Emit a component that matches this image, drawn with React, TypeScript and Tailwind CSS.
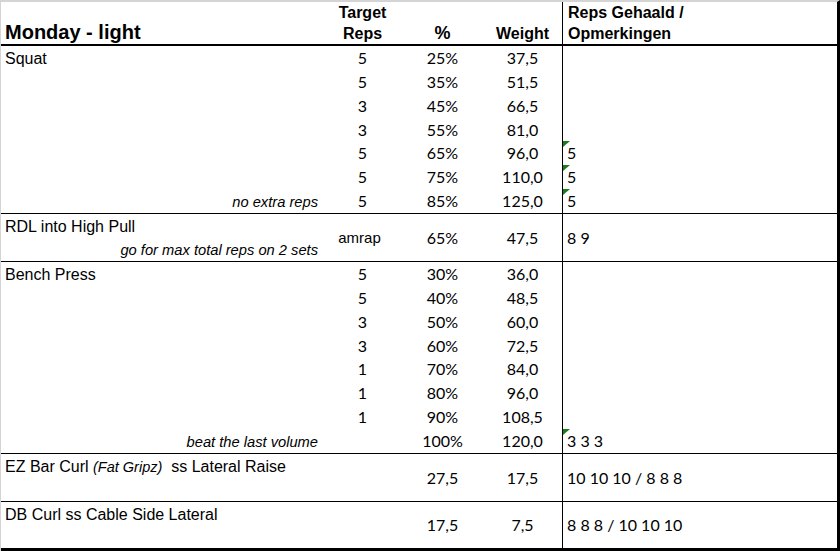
import React from "react";

const ARIAL = "font-['Liberation_Sans',Arial,sans-serif]";
const NUM = "font-['Lato','Noto_Sans',sans-serif]";

type Item = React.ReactNode;

function Tri() {
  return (
    <svg className="absolute left-0 top-0" width="7" height="6" viewBox="0 0 7 6">
      <polygon points="0,0 7,0 0,6" fill="#1e7a1e" />
    </svg>
  );
}

function Col({ items, className, align }: { items: Item[]; className: string; align: string }) {
  return (
    <div className={`flex flex-col ${className}`}>
      {items.map((it, i) => (
        <div key={i} className={`relative flex min-h-0 flex-1 items-center ${align}`}>
          {it}
        </div>
      ))}
    </div>
  );
}

function Note({ children }: { children: React.ReactNode }) {
  return <span className={`${ARIAL} text-[14.7px] italic leading-[18px]`}>{children}</span>;
}

function Name({ children }: { children: React.ReactNode }) {
  return <span className={`${ARIAL} whitespace-pre text-[16px] leading-[18px]`}>{children}</span>;
}

function Num({ children }: { children: React.ReactNode }) {
  return <span className={`${NUM} text-[16px] leading-[18px]`}>{children}</span>;
}

function Comment({ children, tri }: { children?: React.ReactNode; tri?: boolean }) {
  return (
    <>
      {tri && <Tri />}
      <span className={`${NUM} pl-[4px] text-[16px] leading-[18px]`}>{children}</span>
    </>
  );
}

function Section({
  className,
  names,
  reps,
  pct,
  weight,
  notes,
}: {
  className: string;
  names: Item[];
  reps: Item[];
  pct: Item[];
  weight: Item[];
  notes: Item[];
}) {
  return (
    <div className={`flex ${className}`}>
      <Col items={names} className="w-[329px]" align="justify-between" />
      <Col items={reps} className="w-[65px]" align="justify-center" />
      <Col items={pct} className="w-[95px]" align="justify-center" />
      <Col items={weight} className="w-[72px] pr-[7px]" align="justify-center" />
      <Col items={notes} className="flex-1 border-l border-black" align="justify-start" />
    </div>
  );
}

const n = (s: string) => <Num>{s}</Num>;

export default function App() {
  return (
    <div className="h-[551px] w-[840px] overflow-hidden bg-white text-black">
      <div className="flex h-[551px] w-[840px] flex-col border-l border-r-[3px] border-t-2 border-l-[#d4d4d4] border-r-black border-t-[#d4d4d4]">
        {/* header */}
        <div className={`flex h-[44px] border-b-2 border-black ${ARIAL} font-bold`}>
          <div className="flex w-[329px] items-end pl-[4px] text-[20px] leading-[24px]">Monday - light</div>
          <div className="flex w-[65px] flex-col items-center text-[16px] leading-[21px]">
            <span>Target</span>
            <span>Reps</span>
          </div>
          <div className="flex w-[95px] items-end justify-center text-[18px] leading-[21px]">%</div>
          <div className="flex w-[72px] items-end justify-center pr-[7px] text-[16px] leading-[21px]">Weight</div>
          <div className="flex flex-1 flex-col border-l border-black pl-[5px] text-[16px] leading-[21px]">
            <span>Reps Gehaald /</span>
            <span>Opmerkingen</span>
          </div>
        </div>

        {/* Squat */}
        <Section
          className="h-[168px] border-b border-black"
          names={[
            <span className="pl-[4px]"><Name>Squat</Name></span>,
            "",
            "",
            "",
            "",
            "",
            <span className="ml-auto pr-[12px]"><Note>no extra reps</Note></span>,
          ]}
          reps={["5", "5", "3", "3", "5", "5", "5"].map(n)}
          pct={["25%", "35%", "45%", "55%", "65%", "75%", "85%"].map(n)}
          weight={["37,5", "51,5", "66,5", "81,0", "96,0", "110,0", "125,0"].map(n)}
          notes={[
            "",
            "",
            "",
            "",
            <Comment tri>5</Comment>,
            <Comment tri>5</Comment>,
            <Comment tri>5</Comment>,
          ]}
        />

        {/* RDL */}
        <Section
          className="h-[48px] border-b border-black"
          names={[
            <span className="pl-[4px]"><Name>RDL into High Pull</Name></span>,
            <span className="ml-auto pr-[12px]"><Note>go for max total reps on 2 sets</Note></span>,
          ]}
          reps={[<span className={`${ARIAL} pr-[6px] text-[15px] leading-[18px]`}>amrap</span>]}
          pct={[n("65%")]}
          weight={[n("47,5")]}
          notes={[<Comment>8 9</Comment>]}
        />

        {/* Bench */}
        <Section
          className="h-[192px] border-b border-black"
          names={[
            <span className="pl-[4px]"><Name>Bench Press</Name></span>,
            "",
            "",
            "",
            "",
            "",
            "",
            <span className="ml-auto pr-[12px]"><Note>beat the last volume</Note></span>,
          ]}
          reps={["5", "5", "3", "3", "1", "1", "1", ""].map(n)}
          pct={["30%", "40%", "50%", "60%", "70%", "80%", "90%", "100%"].map(n)}
          weight={["36,0", "48,5", "60,0", "72,5", "84,0", "96,0", "108,5", "120,0"].map(n)}
          notes={["", "", "", "", "", "", "", <Comment tri>3 3 3</Comment>]}
        />

        {/* EZ Bar */}
        <Section
          className="h-[48px] border-b border-black"
          names={[
            <span className="pl-[4px]">
              <Name>
                {"EZ Bar Curl "}
                <span className="text-[14.5px] italic">(Fat Gripz)</span>
                {"  ss Lateral Raise"}
              </Name>
            </span>,
            "",
          ]}
          reps={[""]}
          pct={[n("27,5")]}
          weight={[n("17,5")]}
          notes={[<Comment>10 10 10 / 8 8 8</Comment>]}
        />

        {/* DB Curl */}
        <Section
          className="h-[49px] border-b-[3px] border-black"
          names={[<span className="pl-[4px]"><Name>DB Curl ss Cable Side Lateral</Name></span>, ""]}
          reps={[""]}
          pct={[n("17,5")]}
          weight={[n("7,5")]}
          notes={[<Comment>8 8 8 / 10 10 10</Comment>]}
        />
      </div>
    </div>
  );
}
